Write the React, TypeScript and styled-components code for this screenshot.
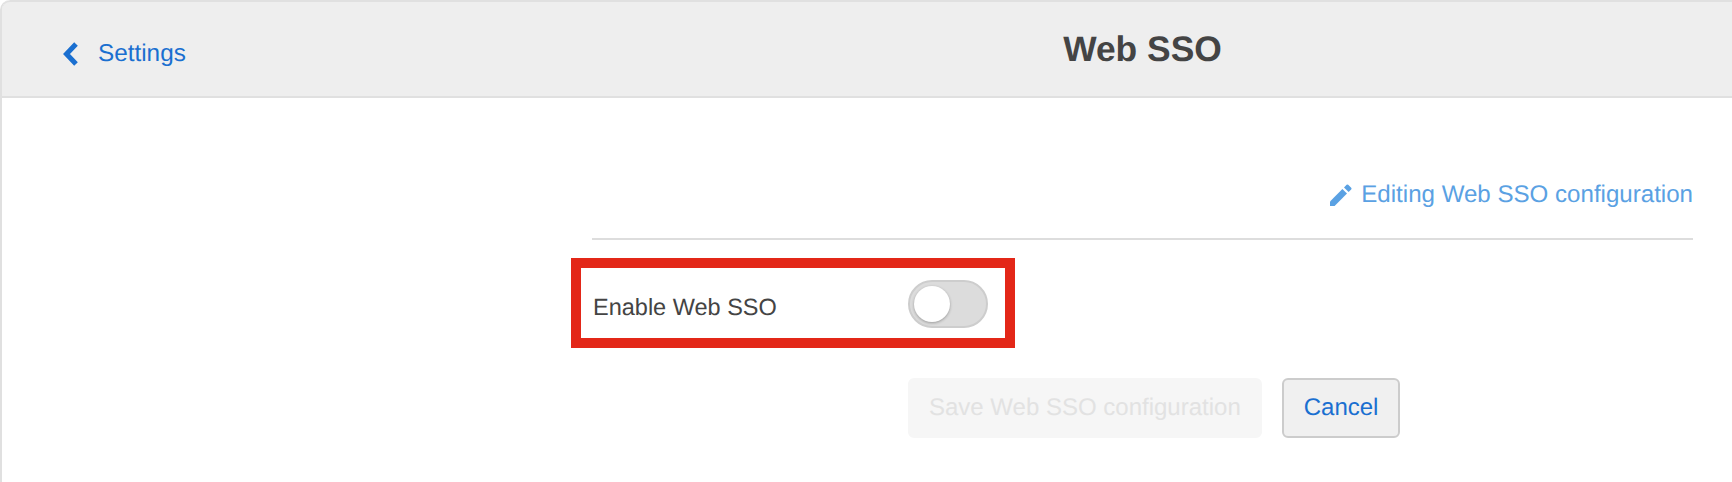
import React from 'react';
import styled, { createGlobalStyle } from 'styled-components';

const GlobalStyle = createGlobalStyle`
  html, body {
    margin: 0;
    padding: 0;
    background: #fff;
  }

  body {
    font-family: 'Liberation Sans', Arial, sans-serif;
    font-size: 24px;
    color: #444;
    text-rendering: geometricPrecision;
  }
`;

const Page = styled.div`
  width: 1732px;
  height: 482px;
  box-sizing: border-box;
  overflow: hidden;
  border-left: 2px solid #e0e0e0;
  border-top-left-radius: 10px;
`;

const Header = styled.header`
  display: grid;
  grid-template-columns: 590px 1101px;
  align-items: center;
  height: 98px;
  box-sizing: border-box;
  padding: 0 0 2px 0;
  margin-left: -2px;
  background: #eee;
  border-top: 2px solid #e0e0e0;
  border-left: 2px solid #e0e0e0;
  border-bottom: 2px solid #e0e0e0;
  border-top-left-radius: 10px;
`;

const BackLink = styled.a`
  display: flex;
  align-items: center;
  gap: 20px;
  padding: 12px 0 0 60px;
  color: #1a6fd0;
  font-size: 24.3px;
`;

const Title = styled.h1`
  margin: 0;
  padding-top: 3px;
  text-align: center;
  font-size: 35.4px;
  font-weight: 700;
  color: #444;
`;

const Form = styled.main`
  display: flex;
  flex-direction: column;
  margin-left: 590px;
  width: 1101px;
`;

const StatusRow = styled.div`
  display: flex;
  justify-content: flex-end;
  align-items: center;
  gap: 9px;
  height: 142px;
  padding-top: 54px;
  box-sizing: border-box;
  border-bottom: 2px solid #ddd;
  color: #5aa1e3;
  font-size: 24.1px;
`;

const Highlight = styled.div`
  display: grid;
  grid-template-columns: 315px auto;
  align-items: center;
  width: 444px;
  height: 90px;
  box-sizing: border-box;
  margin: 18px 0 0 -21px;
  padding-left: 12px;
  border: 10px solid #e32718;
`;

const Label = styled.span`
  padding-top: 8px;
  font-size: 23.5px;
  color: #444;
`;

const Toggle = styled.span`
  position: relative;
  display: block;
  width: 80px;
  height: 48px;
  margin-top: 2px;
  box-sizing: border-box;
  border: 2px solid #cdcdcd;
  border-radius: 24px;
  background: #dcdcdc;
`;

const Knob = styled.span`
  position: absolute;
  top: 4px;
  left: 4px;
  width: 36px;
  height: 36px;
  border-radius: 50%;
  background: #fff;
  box-shadow: 0 1px 3px rgba(0, 0, 0, 0.3);
`;

const Actions = styled.div`
  display: flex;
  gap: 20px;
  margin: 30px 0 0 316px;
`;

const Button = styled.button<{ $disabled?: boolean }>`
  height: 60px;
  box-sizing: border-box;
  padding: 0 ${(p) => (p.$disabled ? '19px' : '20px')};
  font-family: inherit;
  font-size: 24px;
  text-rendering: geometricPrecision;
  border-radius: 6px;
  border: 2px solid ${(p) => (p.$disabled ? '#f6f6f6' : '#ccc')};
  background: ${(p) => (p.$disabled ? '#f6f6f6' : '#f0f0f0')};
  color: ${(p) => (p.$disabled ? '#e2e2e2' : '#1a6fd0')};
`;

const Chevron = () => (
  <svg width="16" height="24" viewBox="0 0 16 24">
    <path d="M14 2 L4.5 12 L14 22" fill="none" stroke="#1a6fd0" strokeWidth="5" />
  </svg>
);

const Pencil = () => (
  <svg width="22" height="22" viewBox="0 0 22 22">
    <path d="M0 17.4 V22 H4.6 L17 9.6 L12.4 5 Z" fill="#5aa1e3" />
    <path d="M14 3.4 L16.6 0.8 Q17.4 0 18.2 0.8 L21.2 3.8 Q22 4.6 21.2 5.4 L18.6 8 Z" fill="#5aa1e3" />
  </svg>
);

const App = (): JSX.Element => (
  <>
    <GlobalStyle />
    <Page>
      <Header>
        <BackLink>
          <Chevron />
          Settings
        </BackLink>
        <Title>Web SSO</Title>
      </Header>
      <Form>
        <StatusRow>
          <Pencil />
          Editing Web SSO configuration
        </StatusRow>
        <Highlight>
          <Label>Enable Web SSO</Label>
          <Toggle>
            <Knob />
          </Toggle>
        </Highlight>
        <Actions>
          <Button $disabled disabled>
            Save Web SSO configuration
          </Button>
          <Button>Cancel</Button>
        </Actions>
      </Form>
    </Page>
  </>
);

export default App;
